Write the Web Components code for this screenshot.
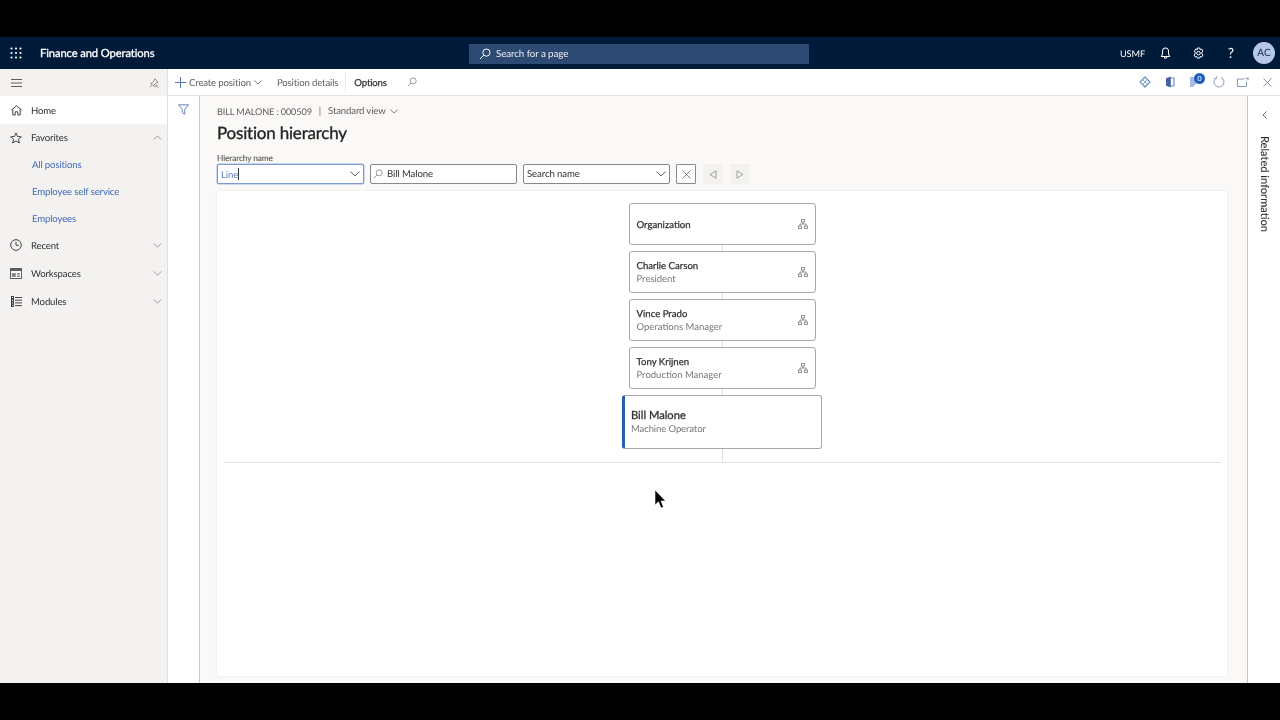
<!DOCTYPE html>
<html lang="en"><head><meta charset="utf-8"><title>Position hierarchy</title>
<style>
html,body{margin:0;padding:0;height:100%;background:#000;overflow:hidden}
body{font-family:Lato,"Open Sans","Liberation Sans",sans-serif;color:#323130;text-rendering:geometricPrecision}
</style></head><body>
<fo-app></fo-app>
<script>
const I={
 waffle:'<svg width="12" height="12" viewBox="0 0 12 12" fill="#fff"><circle cx="1.5" cy="1.5" r="1.1"/><circle cx="6" cy="1.5" r="1.1"/><circle cx="10.5" cy="1.5" r="1.1"/><circle cx="1.5" cy="6" r="1.1"/><circle cx="6" cy="6" r="1.1"/><circle cx="10.5" cy="6" r="1.1"/><circle cx="1.5" cy="10.5" r="1.1"/><circle cx="6" cy="10.5" r="1.1"/><circle cx="10.5" cy="10.5" r="1.1"/></svg>',
 search:(c,s=12)=>`<svg width="${s}" height="${s}" viewBox="0 0 12 12" fill="none" stroke="${c}" stroke-width="1"><circle cx="7.4" cy="4.6" r="3.6"/><path d="M4.8 7.2 1 11"/></svg>`,
 bell:'<svg width="11" height="13" viewBox="0 0 12 14" fill="none" stroke="#fff" stroke-width="1.100"><path d="M6 1C3.800 1 2.700 2.600 2.700 4.600V7.500L1.600 10.200h8.800L9.300 7.500V4.600C9.300 2.600 8.200 1 6 1Z"/><path d="M4.500 10.500c0 2.400 3 2.400 3 0"/></svg>',
 gear:'<svg width="13" height="13" viewBox="0 0 13 13" fill="none" stroke="#fff" stroke-width="1"><path d="M5.300 1h2.400l.4 1.600 1.500-.6 1.300 2-1 1.200v1.700l1 1.200-1.300 2-1.500-.6-.4 1.600H5.300l-.4-1.600-1.500.6-1.300-2 1-1.200V5.200L2.500 4 3.800 2l1.500.6Z"/><circle cx="6.500" cy="6.100" r="1.800"/></svg>',
 chevD:(c='#605e5c',s=9)=>`<svg width="${s}" height="${Math.round(s*.6)}" viewBox="0 0 10 6" fill="none" stroke="${c}" stroke-width="1"><path d="M.5.5 5 5 9.500.5"/></svg>`,
 chevU:`<svg width="9" height="5" viewBox="0 0 10 6" fill="none" stroke="#8a8886" stroke-width="1"><path d="M.5 5.500 5 1l4.500 4.500"/></svg>`,
 plus:'<svg width="11" height="11" viewBox="0 0 11 11" stroke="#5a74b5" stroke-width="1"><path d="M5.500 0v11M0 5.500h11"/></svg>',
 ham:'<svg width="11" height="8" viewBox="0 0 11 8" stroke="#605e5c" stroke-width="1"><path d="M0 .5h11M0 4h11M0 7.500h11"/></svg>',
 pin:'<svg width="10" height="10" viewBox="0 0 10 10" fill="none" stroke="#8a8886" stroke-width=".9"><path d="M5.800.8 9.200 4.200 7 5 5 7 5 8.500 1.500 5 3 5 5 3Z"/><path d="M3 7 .8 9.200M6 6.500l3 3M9 6.500l-3 3"/></svg>',
 home:'<svg width="11" height="11" viewBox="0 0 11 11" fill="none" stroke="#323130" stroke-width=".9"><path d="M.5 5 5.500.8 10.500 5M1.800 4.200V10H4.200V6.800H6.800V10H9.200V4.200"/></svg>',
 star:'<svg width="12" height="12" viewBox="0 0 12 12" fill="none" stroke="#323130" stroke-width=".9"><path d="M6 1 7.500 4.500 11.300 4.800 8.400 7.300 9.300 11 6 9 2.700 11 3.600 7.300.7 4.800 4.500 4.500Z"/></svg>',
 clock:'<svg width="12" height="12" viewBox="0 0 12 12" fill="none" stroke="#323130" stroke-width=".9"><circle cx="6" cy="6" r="5.300"/><path d="M6 2.800V6.300H8.800"/></svg>',
 work:'<svg width="12" height="11" viewBox="0 0 12 11"><rect x=".5" y=".5" width="11" height="10" fill="#fff" stroke="#605e5c"/><rect x="1" y="1" width="10" height="2" fill="#605e5c"/><rect x="1.800" y="5" width="4" height="4" fill="#8a8886"/><rect x="7" y="5" width="3" height="1.500" fill="#8a8886"/><rect x="7" y="7.500" width="3" height="1.500" fill="#8a8886"/></svg>',
 mods:'<svg width="11" height="11" viewBox="0 0 11 11" fill="none" stroke="#323130" stroke-width=".9"><path d="M4 1.500h7M4 4.200h7M4 6.900h7M4 9.600h7"/><rect x=".5" y=".5" width="2" height="2"/><rect x=".5" y="3.300" width="2" height="2"/><rect x=".5" y="6" width="2" height="2"/><rect x=".5" y="8.700" width="1.800" height="1.800"/></svg>',
 filter:'<svg width="11" height="11" viewBox="0 0 11 11" fill="none" stroke="#5a74b5" stroke-width=".9"><path d="M.5.800h10L6.700 5.400V10.200L4.300 8.800V5.400Z"/></svg>',
 org:'<svg width="10" height="10" viewBox="0 0 10 10" fill="none" stroke="#797775" stroke-width=".8"><rect x="3.500" y=".5" width="3" height="2.500"/><rect x=".5" y="7" width="3" height="2.500"/><rect x="6.500" y="7" width="3" height="2.500"/><path d="M5 3V5M2 7V5H8V7"/></svg>',
 x:(c,s)=>`<svg width="${s}" height="${s}" viewBox="0 0 10 10" stroke="${c}" stroke-width=".9"><path d="M.5.500 9.500 9.500M9.500.500.500 9.500"/></svg>`,
 tri:(d)=>`<svg width="8" height="9" viewBox="0 0 8 9" fill="none" stroke="#a19f9d"><path d="${d?'M1 .8 7 4.500 1 8.200Z':'M7 .8 1 4.500 7 8.200Z'}"/></svg>`
};
function def(name,css,html){
 customElements.define(name,class extends HTMLElement{
  connectedCallback(){
   if(this.shadowRoot)return;
   const r=this.attachShadow({mode:'open'});
   const h=typeof html==='function'?html(this):html;
   r.innerHTML=`<style>${css}</style>${h}`;
  }
 });
}
def('fo-header',`
:host{display:grid;grid-template-columns:1fr 340px 1fr;align-items:center;height:32px;background:#001a3a;color:#fff;font-size:10.500px;flex:none}
.l,.r{display:flex;align-items:center}
.l{padding-left:10px}
.t{margin-left:18px;font-size:11.200px;letter-spacing:-.1px;-webkit-text-stroke:.3px #fff}
.s{height:20px;background:#2d4a72;display:flex;align-items:center;gap:5px;padding-left:10px;margin:1px 1px 0 -1px;font-size:9.800px;letter-spacing:-.1px;color:#e8ecf3}
.r{justify-content:flex-end;height:100%;padding-right:5px}
.co{margin-right:3.500px;font-size:9.200px;letter-spacing:-.1px}
.ic{display:flex;width:33px;justify-content:center}
.q{font-size:14px;line-height:14px}
.a{width:22px;height:22px;border-radius:50%;background:#b6c8e8;color:#12294d;font-size:10px;display:flex;align-items:center;justify-content:center;margin-left:5.500px}
`,()=>`<div class="l">${I.waffle}<span class="t">Finance and Operations</span></div>
<div class="s">${I.search('#fff')}<span>Search for a page</span></div>
<div class="r"><span class="co">USMF</span><span class="ic">${I.bell}</span><span class="ic">${I.gear}</span><span class="ic q">?</span><span class="a">AC</span></div>`);

def('fo-cmdbar',`
:host{display:flex;align-items:center;height:27px;border-bottom:1px solid #e1dfdd;box-sizing:border-box;background:#fff;font-size:9.600px;letter-spacing:-.15px;color:#605e5c;padding-left:7px;flex:none}
.i{display:flex;align-items:center;gap:3px;white-space:nowrap}
.tx{padding-top:2px}
.sep{width:1px;height:20px;background:#edebe9;margin:0 8px 0 7px}
.b{color:#323130;-webkit-text-stroke:.25px #323130}
.ml{margin-left:15px}
.tools{margin-left:auto;display:flex;align-items:center;height:100%}
.tools span{display:flex;position:relative;width:24.500px;justify-content:center}
.tools i{position:absolute;left:12px;top:-3px;width:11px;height:11px;border-radius:50%;background:#1c5fc4;color:#fff;font-size:7px;letter-spacing:0;display:flex;align-items:center;justify-content:center;font-style:normal}
`,()=>`<span class="i">${I.plus}<span class="tx">Create position</span>${I.chevD('#605e5c',8)}</span>
<span class="i ml tx">Position details</span><span class="sep"></span>
<span class="i b tx">Options</span><span class="i" style="margin-left:20px">${I.search('#8a8886',10)}</span>
<div class="tools">
<span><svg width="12" height="12" viewBox="0 0 12 12" fill="none" stroke="#6f8fc7" stroke-width="1.300"><path d="M6 1 11 6 6 11 1 6Z" stroke-linejoin="round"/><path d="M4 4 8 8M8 4 4 8" stroke-width=".8"/></svg></span>
<span><svg width="10" height="12" viewBox="0 0 10 12"><path d="M1 2.200 5.800.5V11.500L1 9.800Z" fill="#3f63a3"/><path d="M5.800 2H9V10H5.800" fill="none" stroke="#6f8fc7" stroke-width="1.200"/></svg></span>
<span><svg width="8" height="12" viewBox="0 0 8 12" style="margin-right:3px"><path d="M1 1H7V8L4 11H1Z" fill="#a9bde0"/></svg><i>0</i></span>
<span><svg width="12" height="12" viewBox="0 0 12 12" fill="none" stroke="#8a9bb5"><path d="M3.500 1.600A5 5 0 1 0 8 1.400"/><path d="M3.500 .2V2.500H1.200" stroke-width=".8"/></svg></span>
<span><svg width="12" height="10" viewBox="0 0 12 10" fill="none" stroke="#8a9bb5"><path d="M7.500 2H.5V9.500H9.500V4.500"/><path d="M8.500 1.500h3M11 .5v3"/></svg></span>
<span>${I.x('#6b7c95',9)}</span>
</div>`);

def('nav-item',`
:host{display:flex;align-items:center;height:var(--h,28px);font-size:9.600px;letter-spacing:-.15px;color:#323130;padding-left:10px;box-sizing:border-box}
:host([active]){background:#fff}
:host([link]){color:#4169b5;padding-left:32px}
.ic{width:12px;display:flex;justify-content:center;margin-right:9px}
.tx{padding-top:2px}
.ch{margin-left:auto;margin-right:5px;display:flex}
`,(e)=>{
 const ic=e.getAttribute('icon');const ch=e.getAttribute('chev');
 return `${ic?`<span class="ic">${I[ic]}</span>`:''}<span class="tx"><slot></slot></span>${ch?`<span class="ch">${ch==='u'?I.chevU:I.chevD('#8a8886',9)}</span>`:''}`;
});

def('fo-nav',`
:host{display:block;width:168px;background:#f3f2f1;border-right:1px solid #e1dfdd;flex:none;box-sizing:border-box}
.top{height:27px;display:flex;align-items:center;justify-content:space-between;padding:0 8px 0 11px}
`,()=>`<div class="top">${I.ham}${I.pin}</div><slot></slot>`);

def('fo-filterpane',`
:host{display:flex;justify-content:center;width:32px;border-right:1px solid #c8c6c4;background:#fff;flex:none;padding-top:8px;box-sizing:border-box}
`,()=>I.filter);

def('fo-field',`
:host{display:flex;align-items:center;box-sizing:border-box;height:20px;width:146.500px;border:1px solid #8a8886;border-radius:2px;background:#fff;font-size:9.600px;letter-spacing:-.1px;color:#323130;padding:0 3px}
:host([focus]){border-color:#7c9bd2;box-shadow:0 0 0 .5px #9db5dd;color:#5a7dbb}
:host([search]){padding-left:1px}
.g{margin-right:4px;margin-left:1px;display:flex}
.c{margin-left:auto;display:flex}
.cur{display:inline-block;width:1px;height:12px;background:#333;vertical-align:-2px}
`,(e)=>`${e.hasAttribute('search')?`<span class="g">${I.search('#8a8886',10)}</span>`:''}<span><slot></slot>${e.hasAttribute('focus')?'<span class="cur"></span>':''}</span>${e.hasAttribute('drop')?`<span class="c">${I.chevD('#605e5c',10)}</span>`:''}`);

def('hier-card',`
:host{display:flex;align-items:center;justify-content:space-between;box-sizing:border-box;width:187px;height:42px;border:1px solid #aaa8a6;border-radius:3px;background:#fff;padding:0 7px;flex:none}
:host([cur]){width:200px;height:53.500px;border-left:3px solid #2560b0;padding:0 7px 0 6px}
.tx{padding-top:2px}
.n{font-size:9.600px;-webkit-text-stroke:.25px #323130;color:#323130;line-height:13px}
.r{font-size:9.500px;color:#797775;line-height:13px}
:host([cur]) .n{font-size:11.200px;line-height:14px;-webkit-text-stroke:.3px #323130}
:host([cur]) .r{line-height:13px;letter-spacing:-.1px}
.ic{display:flex}
`,(e)=>`<div class="tx"><div class="n"><slot></slot></div>${e.getAttribute('role-name')?`<div class="r">${e.getAttribute('role-name')}</div>`:''}</div>${e.hasAttribute('cur')?'':`<span class="ic">${I.org}</span>`}`);

def('hier-tree',`
:host{display:flex;flex-direction:column;align-items:center;background:#fff;margin-top:7px;flex:1;box-shadow:0 0 2px #e8e6e4;padding-top:12px;min-height:0}
.last{width:1px;height:13.500px;background:#e1dfdd;flex:none}
.h{height:1px;background:#e1dfdd;align-self:stretch;margin:0 6px 0 7px;flex:none}
`,()=>`<slot></slot><div class="last"></div><div class="h"></div>`);

def('conn-line',`:host{display:block;width:1px;height:6px;background:#e1dfdd;flex:none}`,'');

def('fo-content',`
:host{display:flex;flex-direction:column;flex:1;min-width:0;background:#faf9f8;padding:9px 20px 7px 17px;box-sizing:border-box}
.crumb{font-size:9.600px;letter-spacing:-.15px;color:#605e5c;display:flex;align-items:center;height:13px;white-space:nowrap}
.id{font-size:9.200px;letter-spacing:-.15px}
.crumb b{font-weight:400;margin:0 7px}
.v{display:flex;align-items:center;gap:4px}
h1{font-size:17px;font-weight:400;letter-spacing:-.2px;-webkit-text-stroke:.35px #252423;color:#252423;margin:4px 0 0;line-height:22px}
.lab{font-size:8.300px;letter-spacing:-.1px;color:#605e5c;line-height:10px;margin-top:9px;-webkit-text-stroke:.15px #605e5c}
.row{display:flex;align-items:center;gap:6.500px;margin-top:1px}
.sq{box-sizing:border-box;width:20px;height:20px;display:flex;align-items:center;justify-content:center;border:1px solid #8a8886;background:#fff;border-radius:1px}
.nv{width:20px;height:20px;display:flex;align-items:center;justify-content:center;background:#f3f2f1;margin-left:.5px}
`,()=>`<div class="crumb"><span class="id">BILL MALONE : 000509</span><b>|</b><span class="v">Standard view ${I.chevD('#605e5c',8)}</span></div>
<h1>Position hierarchy</h1>
<div class="lab">Hierarchy name</div>
<div class="row"><slot name="fields"></slot><span class="sq">${I.x('#605e5c',9)}</span><span class="nv">${I.tri(0)}</span><span class="nv">${I.tri(1)}</span></div>
<slot name="tree"></slot>`);

def('fo-related',`
:host{display:flex;flex-direction:column;align-items:center;width:33px;background:#fff;border-left:1px solid #c8c6c4;flex:none;box-sizing:border-box;padding-top:15px}
.t{writing-mode:vertical-rl;font-size:11.100px;color:#323130;margin-top:17px;-webkit-text-stroke:.1px #323130}
`,()=>`<svg width="5" height="8" viewBox="0 0 5 8" fill="none" stroke="#605e5c" stroke-width=".9"><path d="M4.500.500 1 4l3.500 3.500"/></svg><span class="t">Related information</span>`);

def('fo-app',`
:host{display:flex;flex-direction:column;width:1280px;height:720px;background:#000;position:relative;padding:37px 0;box-sizing:border-box;filter:blur(.3px)}
.main{display:flex;flex:1;min-height:0;background:#fff}
.col{display:flex;flex-direction:column;flex:1;min-width:0}
.body{display:flex;flex:1;min-height:0}
.cur{position:absolute;left:654px;top:490px}
`,()=>`<fo-header></fo-header>
<div class="main"><fo-nav>
<nav-item active icon="home">Home</nav-item>
<nav-item icon="star" chev="u" style="--h:27px">Favorites</nav-item>
<nav-item link style="--h:27px">All positions</nav-item>
<nav-item link style="--h:27px">Employee self service</nav-item>
<nav-item link style="--h:26px">Employees</nav-item>
<nav-item icon="clock" chev="d">Recent</nav-item>
<nav-item icon="work" chev="d">Workspaces</nav-item>
<nav-item icon="mods" chev="d">Modules</nav-item>
</fo-nav>
<div class="col"><fo-cmdbar></fo-cmdbar>
<div class="body"><fo-filterpane></fo-filterpane>
<fo-content>
<fo-field slot="fields" focus drop>Line</fo-field><fo-field slot="fields" search>Bill Malone</fo-field><fo-field slot="fields" drop>Search name</fo-field>
<hier-tree slot="tree">
<hier-card>Organization</hier-card><conn-line></conn-line>
<hier-card role-name="President">Charlie Carson</hier-card><conn-line></conn-line>
<hier-card role-name="Operations Manager">Vince Prado</hier-card><conn-line></conn-line>
<hier-card role-name="Production Manager">Tony Krijnen</hier-card><conn-line></conn-line>
<hier-card cur role-name="Machine Operator">Bill Malone</hier-card>
</hier-tree>
</fo-content>
<fo-related></fo-related></div></div></div>
<svg class="cur" width="12" height="19" viewBox="0 0 12 19"><path d="M1 0V15L4.500 11.800 7 18 9.500 17 7 11H11.500Z" fill="#000" stroke="#fff" stroke-width=".6"/></svg>`);
</script></body></html>
